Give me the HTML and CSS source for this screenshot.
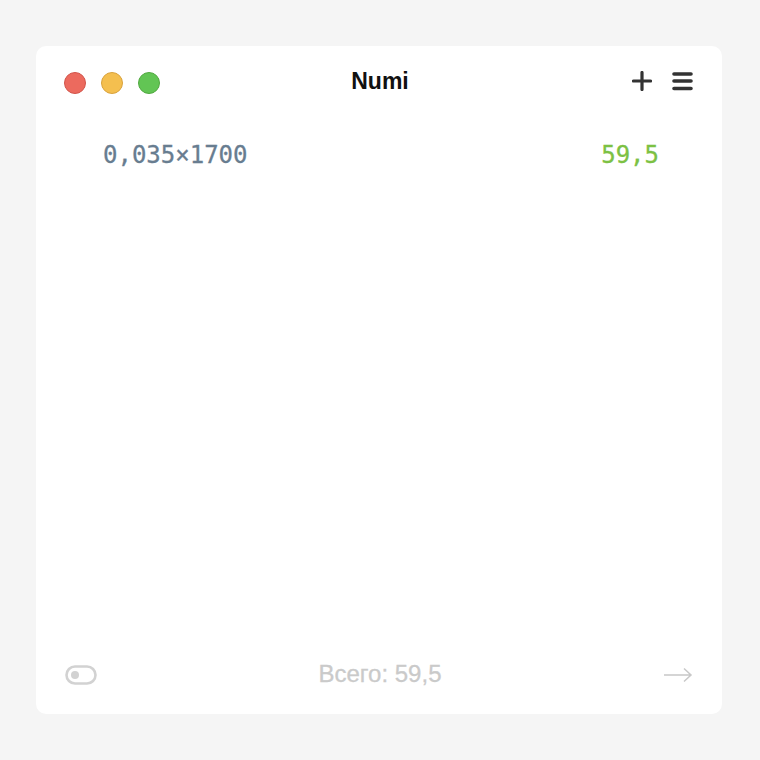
FILE: index.html
```html
<!DOCTYPE html>
<html>
    <head>
        <link rel="stylesheet" href="styles.css">
    </head>
    <body>
        <div class="window">
            <div class="titlebar">
                <div class="lights">
                    <span class="light red"></span>
                    <span class="light yellow"></span>
                    <span class="light green"></span>
                </div>
                <div class="title">Numi</div>
                <div class="tools">
                    <svg width="20" height="20" viewBox="0 0 20 20">
                        <path d="M10 1.5v17M1.5 10h17" stroke="#333" stroke-width="3.2" stroke-linecap="round" fill="none"/>
                    </svg>
                    <svg width="21" height="20" viewBox="0 0 21 20">
                        <path d="M2 3h17M2 10h17M2 17.5h17" stroke="#333" stroke-width="3.6" stroke-linecap="round" fill="none"/>
                    </svg>
                </div>
            </div>
            <div class="sheet">
                <div class="line">
                    <span class="expr">0,035×1700</span>
                    <span class="result">59,5</span>
                </div>
            </div>
            <div class="footer">
                <svg width="32" height="20" viewBox="0 0 32 20">
                    <rect x="1.5" y="1.5" width="29" height="17" rx="8.5" stroke="#d2d2d2" stroke-width="2.6" fill="none"/>
                    <circle cx="10" cy="10" r="4" fill="#d2d2d2"/>
                </svg>
                <div class="total">Всего: 59,5</div>
                <svg width="30" height="16" viewBox="0 0 30 16">
                    <path d="M1 8h27M21 1.5l7 6.5-7 6.5" stroke="#c8c8c8" stroke-width="1.5" fill="none"/>
                </svg>
            </div>
        </div>
    </body>
</html>
```

FILE: styles.css
```css
* {
    box-sizing: border-box;
}

body {
    margin: 0;
    background: #f5f5f5;
    font-family: "Liberation Sans", Arial, sans-serif;
}

.window {
    margin: 46px 0 0 36px;
    width: 686px;
    height: 668px;
    background: #fff;
    border-radius: 10px;
    display: flex;
    flex-direction: column;
}

.titlebar {
    height: 74px;
    padding: 0 29px 0 28px;
    display: grid;
    grid-template-columns: 1fr auto 1fr;
    align-items: center;
}

.lights {
    display: flex;
    gap: 15px;
}

.light {
    width: 22px;
    height: 22px;
    border-radius: 50%;
    border: 1px solid;
}

.red {
    background: #ec6a5e;
    border-color: #d2544a;
}

.yellow {
    background: #f4bf4f;
    border-color: #d9a23c;
}

.green {
    background: #62c554;
    border-color: #51a940;
}

.title {
    font-size: 23px;
    font-weight: bold;
    color: #111;
    margin: -4px 0 0 3px;
}

.tools {
    display: flex;
    justify-content: flex-end;
    align-items: center;
    gap: 20px;
    margin-top: -4px;
}

.sheet {
    flex: 1;
    padding: 20px 63px 0 67px;
}

.line {
    display: flex;
    justify-content: space-between;
    font-family: "DejaVu Sans Mono", monospace;
    font-size: 24px;
    line-height: 30px;
    -webkit-text-stroke: 0.3px;
}

.expr {
    color: #687d90;
}

.result {
    color: #7cc143;
}

.footer {
    height: 78px;
    padding: 0 29px;
    display: flex;
    justify-content: space-between;
    align-items: center;
}

.total {
    font-size: 24px;
    color: #cacaca;
    margin-top: -3px;
    -webkit-text-stroke: 0.3px;
}
```
